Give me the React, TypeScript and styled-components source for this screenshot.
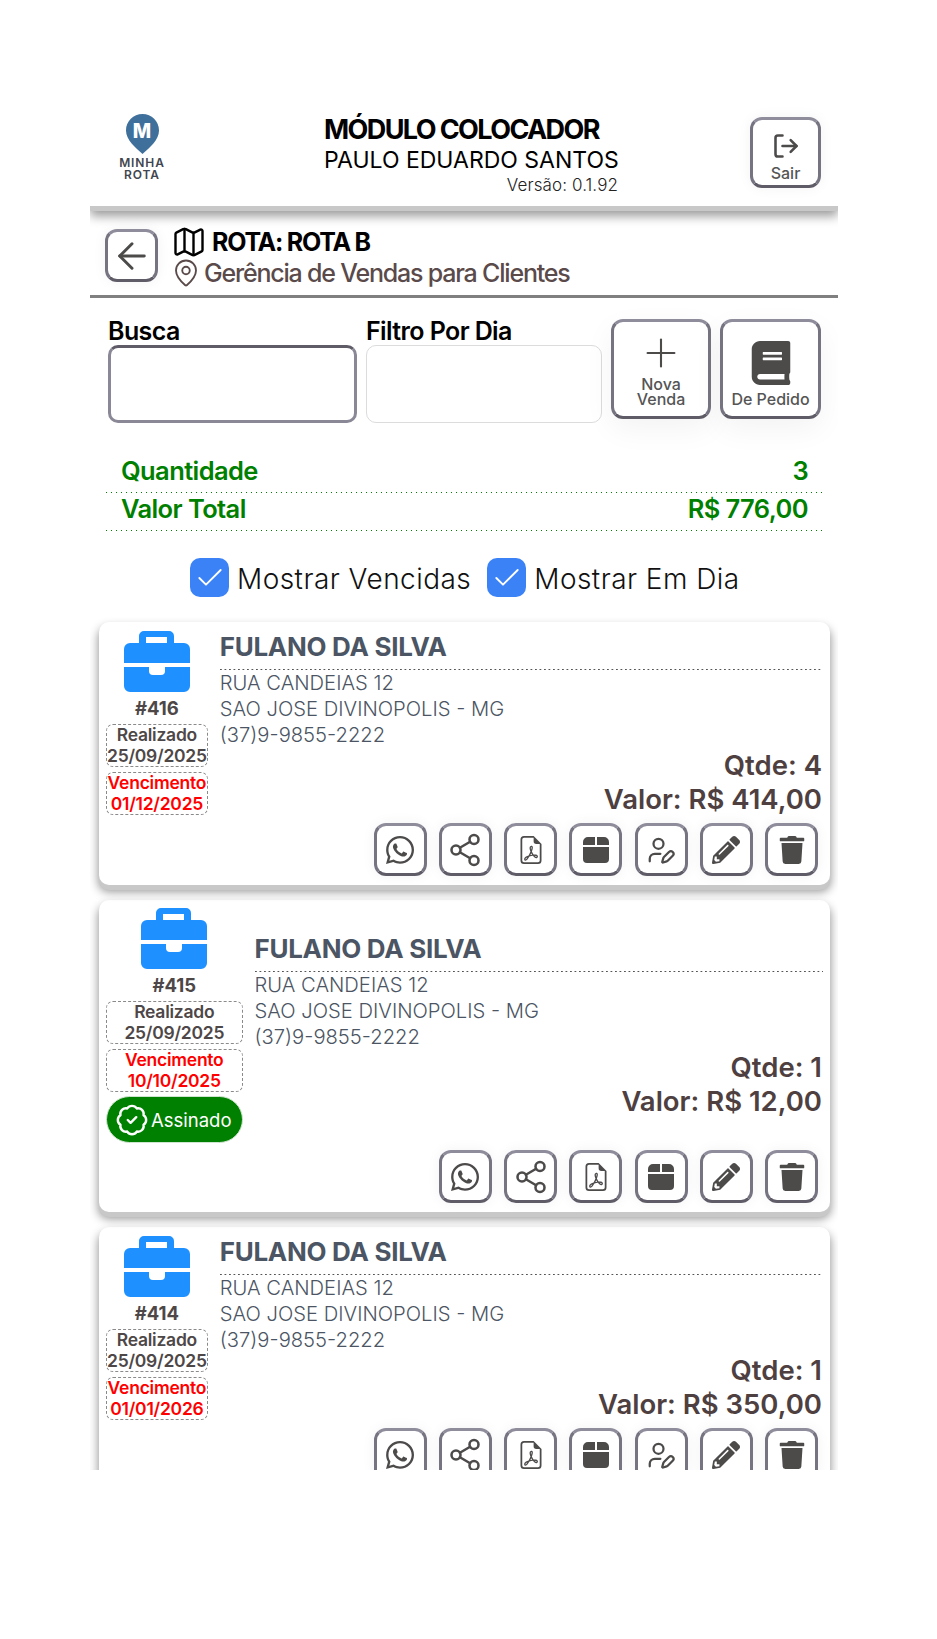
import React from 'react';
import styled, { createGlobalStyle } from 'styled-components';
import { ArrowLeft, BadgeCheck, Check, LogOut, Map, MapPin, Plus, Share2, UserPen } from 'lucide-react';
import { FaBook, FaPencilAlt, FaTrash, FaWhatsapp } from 'react-icons/fa';
import { BsFileEarmarkPdf } from 'react-icons/bs';

interface Sale {
  id: number;
  doneAt: string;
  dueAt: string;
  qty: number;
  value: string;
  signed?: boolean;
}

const sales: Sale[] = [
  { id: 416, doneAt: '25/09/2025', dueAt: '01/12/2025', qty: 4, value: 'R$ 414,00' },
  { id: 415, doneAt: '25/09/2025', dueAt: '10/10/2025', qty: 1, value: 'R$ 12,00', signed: true },
  { id: 414, doneAt: '25/09/2025', dueAt: '01/01/2026', qty: 1, value: 'R$ 350,00' },
];

const GlobalStyle = createGlobalStyle`
  html, body {
    margin: 0;
    background: #fff;
    font-family: Inter, "Liberation Sans", sans-serif;
  }
  * {
    box-sizing: border-box;
  }
`;

const Page = styled.div`
  width: 937px;
  height: 1639px;
  padding: 100px 0 0 90px;
`;

const Panel = styled.div`
  width: 748px;
  height: 1370px;
  overflow: hidden;
`;

const TopBar = styled.header`
  height: 111px;
  display: flex;
  align-items: flex-start;
  padding: 14px 17px 0 26px;
  border-bottom: 5px solid #c8c8c8;
  box-shadow: 0 5px 10px rgba(0, 0, 0, 0.4);
  position: relative;
`;

const Logo = styled.div`
  width: 52px;
  display: flex;
  flex-direction: column;
  align-items: center;
  color: #3f4650;
  font-size: 12px;
  font-weight: 600;
  line-height: 11.7px;
  letter-spacing: 0.9px;
  text-align: center;
`;

const LogoText = styled.div`
  margin-top: 3px;
`;

const TitleBlock = styled.div`
  margin: -1px 0 0 156px;
  width: 294px;
  display: flex;
  flex-direction: column;
`;

const Title = styled.div`
  font-size: 27px;
  font-weight: 700;
  line-height: 33px;
  letter-spacing: -1.6px;
  color: #000;
  white-space: nowrap;
`;

const UserName = styled.div`
  font-size: 23px;
  line-height: 28px;
  color: #000;
  white-space: nowrap;
`;

const Version = styled.div`
  font-size: 17px;
  font-weight: 300;
  line-height: 22px;
  letter-spacing: 0.1px;
  text-align: right;
  color: #222;
`;

const ActionButton = styled.button<{ $w?: number; $h?: number }>`
  width: ${p => p.$w ?? 53}px;
  height: ${p => p.$h ?? 53}px;
  flex: none;
  padding: 0;
  display: flex;
  flex-direction: column;
  align-items: center;
  justify-content: center;
  background: #fff;
  color: #4d4a4a;
  border: 3px solid;
  border-color: #8f8c9b #777482 #5f5c68;
  border-radius: 12px;
  box-shadow: 0 0 14px rgba(0, 0, 0, 0.05);
  font-family: inherit;
`;

const ExitButton = styled(ActionButton)`
  margin-left: auto;
  margin-top: 3px;
  padding-top: 8px;
`;

const NewButton = styled(ActionButton)<{ $gap: number }>`
  justify-content: flex-end;
  padding-bottom: 9px;
  gap: ${p => p.$gap}px;
  box-shadow: 0 10px 30px rgba(0, 0, 0, 0.05);
`;

const ButtonLabel = styled.span`
  font-size: 16px;
  font-weight: 500;
  line-height: 15px;
  color: #555;
  text-align: center;
  white-space: nowrap;
`;

const ExitLabel = styled(ButtonLabel)`
  margin-top: 6px;
`;

const RouteBar = styled.div`
  height: 87px;
  display: flex;
  align-items: center;
  gap: 13px;
  padding: 5px 0 0 15px;
  border-bottom: 3px solid #808080;
`;

const RouteText = styled.div`
  display: flex;
  flex-direction: column;
  gap: 3px;
  margin-top: 4px;
`;

const RouteLine = styled.div<{ $gap: number }>`
  display: flex;
  align-items: center;
  height: 28px;
  gap: ${p => p.$gap}px;
`;

const RouteTitle = styled.span`
  font-size: 25px;
  font-weight: 700;
  letter-spacing: -1.25px;
  color: #000;
`;

const RouteSubtitle = styled.span`
  font-size: 25px;
  font-weight: 500;
  letter-spacing: -1.2px;
  color: #5a4a4a;
`;

const FilterRow = styled.div`
  display: flex;
  padding: 19px 17px 0 18px;
`;

const Field = styled.label<{ $w: number }>`
  width: ${p => p.$w}px;
  margin-right: 9px;
  display: flex;
  flex-direction: column;
`;

const FieldLabel = styled.span`
  font-size: 25px;
  font-weight: 600;
  line-height: 28px;
  letter-spacing: -0.6px;
  color: #000;
`;

const SearchInput = styled.input`
  height: 78px;
  border: 3px solid;
  border-color: #5f5c68 #8a8796 #8a8796;
  border-radius: 10px;
  background: #fff;
`;

const DayInput = styled.input`
  height: 78px;
  border: 1px solid #dcdcdc;
  border-radius: 10px;
  background: #fff;
`;

const NewButtons = styled.div`
  display: flex;
  gap: 9px;
  margin-top: 2px;
  height: 100px;
`;

const Summary = styled.div`
  margin: 32px 16px 0 16px;
`;

const SummaryRow = styled.div`
  height: 38px;
  display: flex;
  align-items: center;
  justify-content: space-between;
  padding: 0 14px 7px 15px;
  background: linear-gradient(to right, #008000 1.5px, transparent 1.5px) left bottom / 5px 1px repeat-x;
  color: #008000;
  font-size: 25.5px;
  font-weight: 600;
  letter-spacing: -0.6px;
`;

const Toggles = styled.div`
  display: flex;
  padding: 27px 0 0 100px;
  margin-bottom: 25px;
`;

const Toggle = styled.div`
  display: flex;
  align-items: center;
  gap: 8px;
  margin-right: 16px;
  font-size: 28px;
  font-weight: 300;
  letter-spacing: 0.45px;
  color: #111;
`;

const ToggleText = styled.span`
  padding-top: 2px;
`;

const CheckBox = styled.span`
  width: 39px;
  height: 39px;
  border-radius: 10px;
  background: #3b82f6;
  display: flex;
  align-items: center;
  justify-content: center;
  color: #fff;
`;

const CardList = styled.div`
  display: flex;
  flex-direction: column;
  gap: 15px;
  padding: 0 8px 0 9px;
`;

const Card = styled.article<{ $minHeight: number; $layer: number; $top: number }>`
  min-height: ${p => p.$minHeight}px;
  display: flex;
  gap: 12px;
  padding: ${p => p.$top}px 7px 9px 7px;
  background: #fff;
  border-radius: 10px;
  box-shadow: 0 5px 0 #c8c8c8, 0 6px 10px 1px rgba(0, 0, 0, 0.4);
  position: relative;
  z-index: ${p => p.$layer};
`;

const LeftColumn = styled.div`
  display: flex;
  flex-direction: column;
  align-items: stretch;
  flex: none;
`;

const Briefcase = styled.svg`
  width: 66px;
  height: 61px;
  align-self: center;
`;

const SaleId = styled.div`
  font-size: 18.5px;
  font-weight: 700;
  line-height: 22px;
  margin: 5px 0 5px;
  text-align: center;
  color: #4e4747;
`;

const DateBox = styled.div<{ $due?: boolean }>`
  border: 1px dashed #8a8a8a;
  border-radius: 7px;
  margin-bottom: 5px;
  font-size: 17.5px;
  font-weight: 600;
  line-height: 20.5px;
  letter-spacing: -0.25px;
  text-align: center;
  white-space: nowrap;
  color: ${p => (p.$due ? '#ff0000' : '#4e4747')};
`;

const SignedPill = styled.div`
  height: 47px;
  margin-top: -1px;
  display: flex;
  align-items: center;
  gap: 2px;
  padding: 0 10px 0 8px;
  border-radius: 24px;
  background: #008000;
  color: #fff;
  font-size: 18.5px;
  border: 1px solid #cfe5cf;
`;

const RightColumn = styled.div`
  flex: 1;
  min-width: 0;
  display: flex;
  flex-direction: column;
`;

const CustomerBlock = styled.div<{ $top: number }>`
  margin-top: ${p => p.$top}px;
`;

const CustomerName = styled.div`
  font-size: 26px;
  font-weight: 700;
  line-height: 32px;
  letter-spacing: -0.3px;
  padding-bottom: 7px;
  background: linear-gradient(to right, #555 1.5px, transparent 1.5px) left bottom / 4.5px 1px repeat-x;
  color: #4b5563;
`;

const AddressLine = styled.div`
  font-size: 20.2px;
  font-weight: 300;
  line-height: 26px;
  color: #4b5563;
  &:first-of-type {
    margin-top: 2px;
  }
`;

const Totals = styled.div`
  margin-top: 0;
  padding-right: 1px;
  text-align: right;
  font-size: 27.5px;
  font-weight: 600;
  line-height: 34px;
  color: #4e4040;
`;

const CardButtons = styled.div`
  margin-top: auto;
  padding: 0 5px 0 0;
  display: flex;
  justify-content: flex-end;
  gap: 12.25px;
`;

const BriefcaseIcon = () => (
  <Briefcase viewBox="0 0 66 61">
    <path
      fill="#1e90ff"
      fillRule="evenodd"
      d="M20 0h25a5 5 0 0 1 5 5v7h10a6 6 0 0 1 6 6v14H0V18a6 6 0 0 1 6-6h9V5a5 5 0 0 1 5-5Zm2 6v6h21V6ZM0 36h25v4a4 4 0 0 0 4 4h8a4 4 0 0 0 4-4v-4h25v19a6 6 0 0 1-6 6H6a6 6 0 0 1-6-6Z"
    />
  </Briefcase>
);

const BoxIcon = () => (
  <svg width="26" height="26" viewBox="0 0 26 26" fill="currentColor">
    <path d="M5 0h7v8H0V5a5 5 0 0 1 5-5Zm9 0h7a5 5 0 0 1 5 5v3H14ZM0 10h26v12a4 4 0 0 1-4 4H4a4 4 0 0 1-4-4Z" />
  </svg>
);

const SaleCard: React.FC<{ sale: Sale; layer: number }> = ({ sale, layer }) => (
  <Card $minHeight={sale.signed ? 312 : 263} $layer={layer} $top={sale.signed ? 8 : 9}>
    <LeftColumn>
      <BriefcaseIcon />
      <SaleId>#{sale.id}</SaleId>
      <DateBox>
        Realizado
        <br />
        {sale.doneAt}
      </DateBox>
      <DateBox $due>
        Vencimento
        <br />
        {sale.dueAt}
      </DateBox>
      {sale.signed && (
        <SignedPill>
          <BadgeCheck size={34} strokeWidth={1.7} />
          Assinado
        </SignedPill>
      )}
    </LeftColumn>
    <RightColumn>
      <CustomerBlock $top={sale.signed ? 25 : 0}>
        <CustomerName>FULANO DA SILVA</CustomerName>
        <AddressLine>RUA CANDEIAS 12</AddressLine>
        <AddressLine>SAO JOSE DIVINOPOLIS - MG</AddressLine>
        <AddressLine>(37)9-9855-2222</AddressLine>
        <Totals>
          <div>Qtde: {sale.qty}</div>
          <div>Valor: {sale.value}</div>
        </Totals>
      </CustomerBlock>
      <CardButtons>
        <ActionButton>
          <FaWhatsapp size={32} />
        </ActionButton>
        <ActionButton>
          <Share2 size={36} strokeWidth={1.7} />
        </ActionButton>
        <ActionButton>
          <BsFileEarmarkPdf size={28} />
        </ActionButton>
        <ActionButton>
          <BoxIcon />
        </ActionButton>
        {!sale.signed && (
          <ActionButton>
            <UserPen size={30} strokeWidth={1.8} />
          </ActionButton>
        )}
        <ActionButton>
          <FaPencilAlt size={28} />
        </ActionButton>
        <ActionButton>
          <FaTrash size={28} />
        </ActionButton>
      </CardButtons>
    </RightColumn>
  </Card>
);

export default function App() {
  return (
    <Page>
      <GlobalStyle />
      <Panel>
        <TopBar>
          <Logo>
            <svg width="33" height="40" viewBox="0 0 33 40">
              <path
                fill="#3f6f9b"
                d="M16.5 0C7.4 0 0 7.3 0 16.4 0 26 9.5 33.5 16.5 40 23.5 33.5 33 26 33 16.4 33 7.3 25.6 0 16.5 0Z"
              />
              <text x="16.5" y="23.5" textAnchor="middle" fontSize="19.5" fontWeight="800" fill="#fff">
                M
              </text>
            </svg>
            <LogoText>
              MINHA
              <br />
              ROTA
            </LogoText>
          </Logo>
          <TitleBlock>
            <Title>MÓDULO COLOCADOR</Title>
            <UserName>PAULO EDUARDO SANTOS</UserName>
            <Version>Versão: 0.1.92</Version>
          </TitleBlock>
          <ExitButton $w={71} $h={71}>
            <LogOut size={28} strokeWidth={2.2} />
            <ExitLabel>Sair</ExitLabel>
          </ExitButton>
        </TopBar>
        <RouteBar>
          <ActionButton>
            <ArrowLeft size={42} strokeWidth={1.7} />
          </ActionButton>
          <RouteText>
            <RouteLine $gap={5}>
              <Map size={36} strokeWidth={1.6} color="#000" />
              <RouteTitle>ROTA: ROTA B</RouteTitle>
            </RouteLine>
            <RouteLine $gap={3}>
              <MapPin size={30} strokeWidth={1.5} color="#5a4a4a" />
              <RouteSubtitle>Gerência de Vendas para Clientes</RouteSubtitle>
            </RouteLine>
          </RouteText>
        </RouteBar>
        <FilterRow>
          <Field $w={249}>
            <FieldLabel>Busca</FieldLabel>
            <SearchInput />
          </Field>
          <Field $w={236}>
            <FieldLabel>Filtro Por Dia</FieldLabel>
            <DayInput />
          </Field>
          <NewButtons>
            <NewButton $w={100} $h={100} $gap={1}>
              <Plus size={46} strokeWidth={1.1} />
              <ButtonLabel>
                Nova
                <br />
                Venda
              </ButtonLabel>
            </NewButton>
            <NewButton $w={101} $h={100} $gap={7}>
              <FaBook size={44} />
              <ButtonLabel>De Pedido</ButtonLabel>
            </NewButton>
          </NewButtons>
        </FilterRow>
        <Summary>
          <SummaryRow>
            <span>Quantidade</span>
            <span>3</span>
          </SummaryRow>
          <SummaryRow>
            <span>Valor Total</span>
            <span>R$ 776,00</span>
          </SummaryRow>
        </Summary>
        <Toggles>
          <Toggle>
            <CheckBox>
              <Check size={32} strokeWidth={1.4} />
            </CheckBox>
            <ToggleText>Mostrar Vencidas</ToggleText>
          </Toggle>
          <Toggle>
            <CheckBox>
              <Check size={32} strokeWidth={1.4} />
            </CheckBox>
            <ToggleText>Mostrar Em Dia</ToggleText>
          </Toggle>
        </Toggles>
        <CardList>
          {sales.map((sale, index) => (
            <SaleCard key={sale.id} sale={sale} layer={sales.length - index} />
          ))}
        </CardList>
      </Panel>
    </Page>
  );
}
